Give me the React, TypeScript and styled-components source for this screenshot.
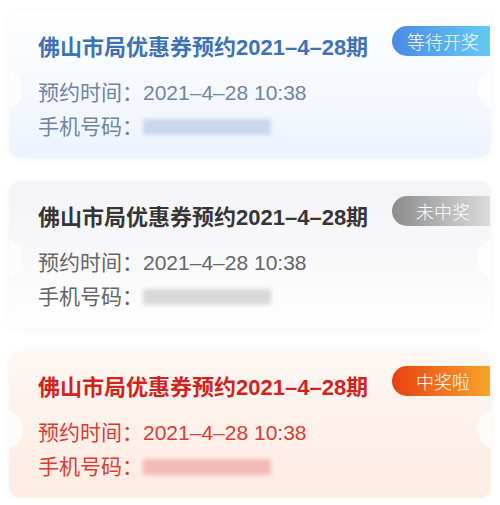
import React from "react";
import styled, { createGlobalStyle, css } from "styled-components";

type Status = "wait" | "lose" | "win";

const GlobalStyle = createGlobalStyle`
  html, body { margin: 0; padding: 0; background: #ffffff; }
  body { font-family: "Liberation Sans", "Noto Sans CJK SC", sans-serif; }
`;

const theme = {
  wait: {
    bg: "linear-gradient(180deg, #ffffff 0%, #f5f8fe 55%, #eef4fc 100%)",
    title: "#3d72b6",
    info: "#7084a4",
    badge: "linear-gradient(90deg, #4a8ae6 0%, #64cbf6 100%)",
    blur: "#c6d4ee",
  },
  lose: {
    bg: "linear-gradient(180deg, #f4f4f6 0%, #f8f8fa 50%, #ffffff 100%)",
    title: "#363636",
    info: "#666666",
    badge: "linear-gradient(90deg, #8c8c8c 0%, #dcdcdc 100%)",
    blur: "#d6d6d6",
  },
  win: {
    bg: "linear-gradient(180deg, #fdf7f4 0%, #fdf1ea 55%, #fdece1 100%)",
    title: "#d2231c",
    info: "#e03a32",
    badge: "linear-gradient(90deg, #e8400f 0%, #f6a52a 100%)",
    blur: "#f3b4b2",
  },
};

const Page = styled.div`
  display: flex;
  flex-direction: column;
  gap: 23px;
  padding: 11px 9px 0 9px;
`;

const Notch = css`
  content: "";
  position: absolute;
  top: 58px;
  width: 40px;
  height: 40px;
  border-radius: 50%;
  background: rgba(255, 255, 255, 0.7);
`;

const Card = styled.div<{ $status: Status }>`
  position: relative;
  height: 147px;
  border-radius: 12px;
  background: ${(p) => theme[p.$status].bg};
  box-shadow: 0 1px 8px rgba(0, 0, 0, 0.045);
  padding: 15px 0 0 29px;
  box-sizing: border-box;
  overflow: hidden;
  &::before {
    ${Notch};
    left: -26px;
  }
  &::after {
    ${Notch};
    right: -26px;
  }
`;

const Header = styled.div`
  display: flex;
  justify-content: space-between;
  align-items: flex-start;
`;

const Title = styled.div<{ $status: Status }>`
  margin-top: 9px;
  font-size: 22px;
  line-height: 26px;
  font-weight: bold;
  color: ${(p) => theme[p.$status].title};
  white-space: nowrap;
`;

const Badge = styled.div<{ $status: Status }>`
  width: 98px;
  height: 30px;
  margin-right: 1px;
  border-radius: 15px 0 0 15px;
  background: ${(p) => theme[p.$status].badge};
  color: #ffffff;
  font-family: "Noto Sans CJK SC", sans-serif;
  font-weight: 300;
  font-size: 18px;
  line-height: 30px;
  text-align: center;
  padding-left: 4px;
  box-sizing: border-box;
`;

const Info = styled.div<{ $status: Status }>`
  margin-top: 15px;
  display: flex;
  flex-direction: column;
  color: ${(p) => theme[p.$status].info};
  font-size: 21px;
`;

const Line = styled.div`
  height: 34px;
  line-height: 34px;
  display: flex;
  align-items: center;
  white-space: nowrap;
`;

const Blur = styled.div<{ $status: Status }>`
  width: 128px;
  height: 16px;
  margin-left: 0;
  background: ${(p) => theme[p.$status].blur};
  filter: blur(2px);
  opacity: 0.9;
`;

const items: { status: Status; label: string }[] = [
  { status: "wait", label: "等待开奖" },
  { status: "lose", label: "未中奖" },
  { status: "win", label: "中奖啦" },
];

export default function App() {
  return (
    <>
      <GlobalStyle />
      <Page>
        {items.map((it) => (
          <Card key={it.status} $status={it.status}>
            <Header>
              <Title $status={it.status}>佛山市局优惠券预约2021–4–28期</Title>
              <Badge $status={it.status}>{it.label}</Badge>
            </Header>
            <Info $status={it.status}>
              <Line>预约时间：2021–4–28 10:38</Line>
              <Line>
                手机号码：
                <Blur $status={it.status} />
              </Line>
            </Info>
          </Card>
        ))}
      </Page>
    </>
  );
}
